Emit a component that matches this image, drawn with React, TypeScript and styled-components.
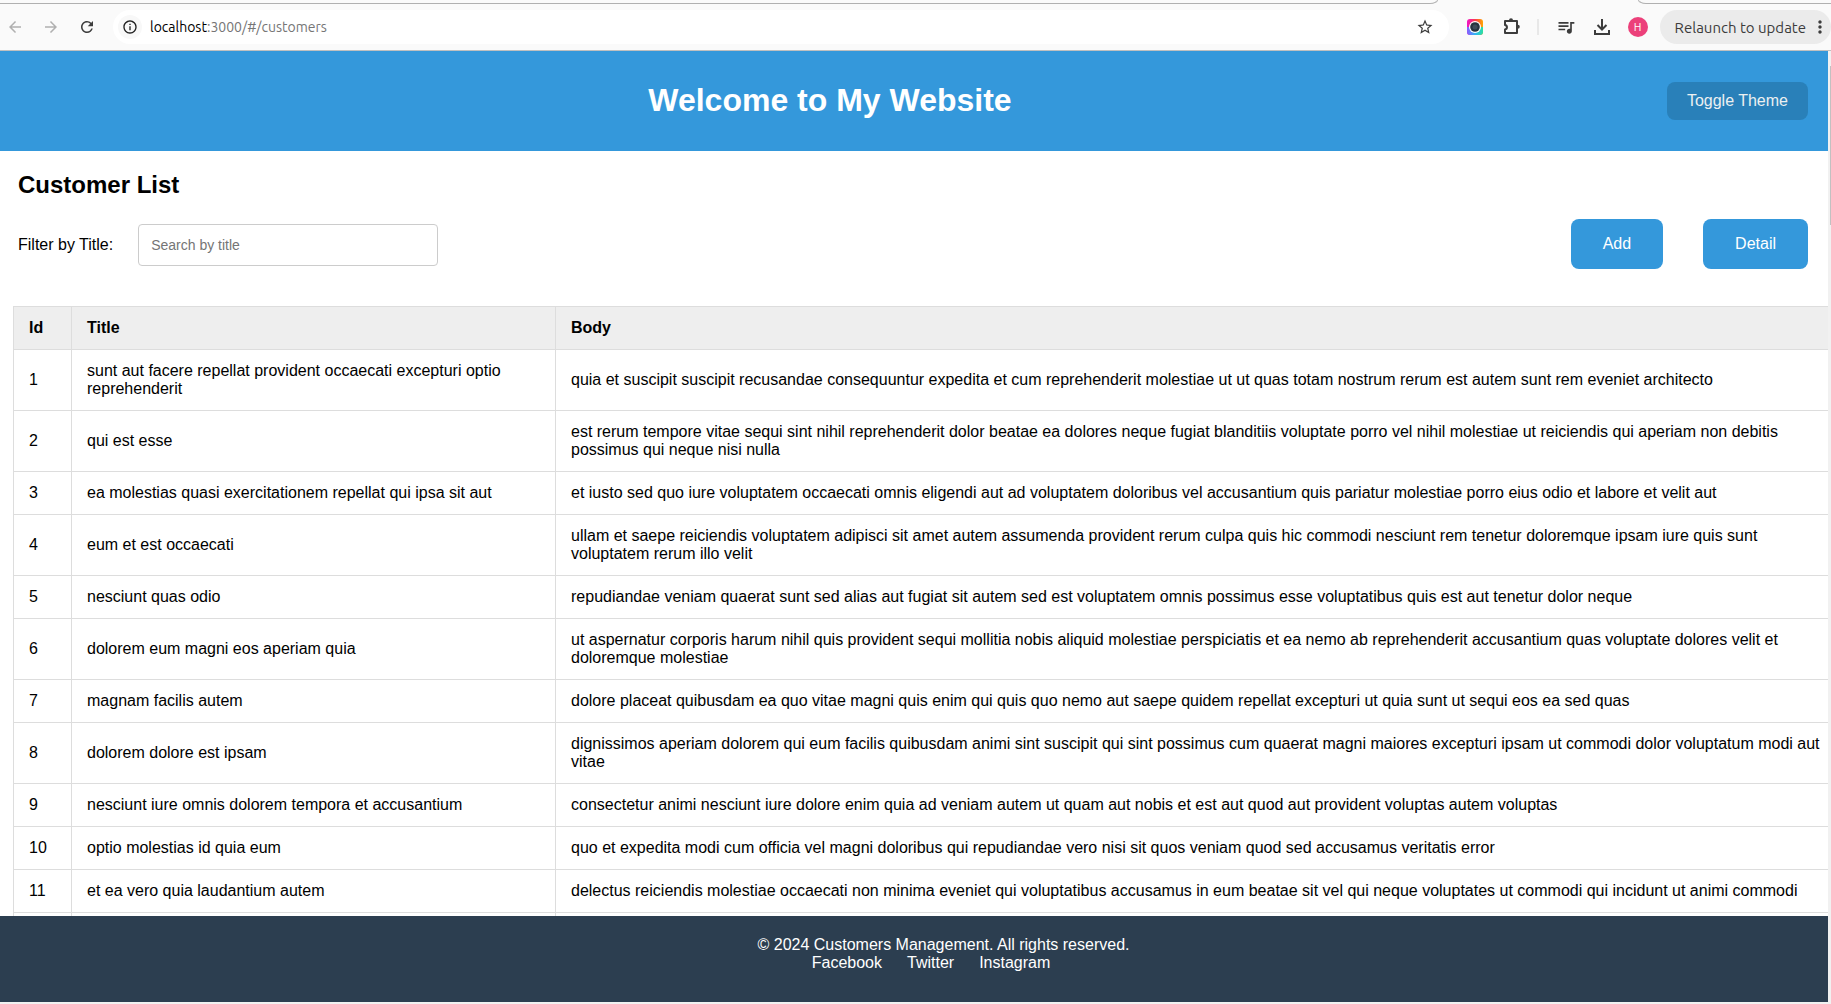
import React, { useState } from "react";
import styled, { createGlobalStyle } from "styled-components";
import {
  MdArrowBack,
  MdArrowForward,
  MdInfoOutline,
  MdMoreVert,
  MdQueueMusic,
  MdRefresh,
  MdStarBorder,
} from "react-icons/md";

const GlobalStyle = createGlobalStyle`
  * {
    box-sizing: border-box;
  }

  body {
    margin: 0;
    overflow: hidden;
    color: #000;
    background: #fff;
    font-family: "Liberation Sans", Arial, sans-serif;
    font-size: 16px;
  }

  button,
  input {
    font-family: inherit;
  }
`;

const Window = styled.div`
  display: flex;
  flex-direction: column;
  height: 100vh;
`;

/* Browser chrome */

const TabStrip = styled.div`
  display: flex;
  flex: none;
  gap: 200px;
  height: 4px;
  background: #fafafa;
`;

const TabEdge = styled.div<{ $side: "left" | "right" }>`
  border: 0 solid #b0b0b0;
  border-bottom-width: 1px;
  ${({ $side }) =>
    $side === "left"
      ? "flex: 1; border-right-width: 1px; border-bottom-right-radius: 8px 4px;"
      : "width: 193px; border-left-width: 1px; border-bottom-left-radius: 8px 4px;"}
`;

const Toolbar = styled.div`
  display: flex;
  flex: none;
  align-items: center;
  height: 47px;
  padding-left: 5px;
  border-bottom: 1px solid #c0c0c0;
  background: #fafafa;
  color: #3c3c3c;
  font-family: Ubuntu, "Noto Sans", sans-serif;
  font-size: 14px;
`;

const NavGroup = styled.div`
  display: flex;
  gap: 16px;
  margin-right: 16px;
`;

const IconButton = styled.button`
  display: flex;
  align-items: center;
  justify-content: center;
  width: 20px;
  height: 20px;
  padding: 0;
  border: 0;
  background: none;
  color: #3c3c3c;

  &:disabled {
    color: #b0b0b0;
  }
`;

const AddressBar = styled.div`
  display: flex;
  flex: 1;
  align-items: center;
  gap: 8px;
  height: 34px;
  padding: 0 14px 0 5px;
  border-radius: 17px;
  background: #fff;
`;

const SiteInfo = styled(IconButton)`
  width: 24px;
  height: 24px;
  border-radius: 50%;
  background: #f8f8f8;
  color: #202020;
`;

const Url = styled.div`
  flex: 1;
  color: #757575;
`;

const Host = styled.span`
  color: #000;
`;

const Actions = styled.div`
  display: flex;
  align-items: center;
  gap: 16px;
  padding: 0 12px 0 18px;
`;

const PinnedExtension = styled(IconButton)`
  width: 18px;
  justify-content: flex-start;
`;

const Divider = styled.div`
  width: 2px;
  height: 16px;
  margin: 0 1px 0 0;
  background: #e8e8e8;
`;

const Avatar = styled(IconButton)`
  border-radius: 50%;
  background: #ec407a;
  color: #fff;
  font-size: 11px;
`;

const Relaunch = styled.button`
  display: flex;
  align-items: center;
  gap: 4px;
  height: 34px;
  padding: 0 1px 0 15px;
  border: 0;
  border-radius: 17px;
  background: #ebebeb;
  color: #3c3c3c;
  font-size: 15px;
`;

/* Page */

const Viewport = styled.div`
  display: flex;
  flex: 1;
  min-height: 0;
`;

const Page = styled.div`
  display: flex;
  flex: 1;
  flex-direction: column;
  min-width: 0;
`;

const Header = styled.header`
  display: flex;
  flex: none;
  align-items: center;
  gap: 27px;
  height: 100px;
  padding: 0 20px;
  background: #3498db;
  color: #fff;
`;

const SiteTitle = styled.h1`
  flex: 1;
  margin: 0;
  padding-bottom: 2px;
  font-size: 32px;
  line-height: 36px;
  text-align: center;
`;

const Button = styled.button<{ $compact?: boolean }>`
  padding: ${({ $compact }) => ($compact ? "10px 20px" : "16px 32px")};
  border: 0;
  border-radius: 8px;
  background: ${({ $compact }) => ($compact ? "#2980b9" : "#3498db")};
  color: ${({ $compact }) => ($compact ? "#ecf0f1" : "#fff")};
  font-size: 16px;
  line-height: 18px;
`;

const Main = styled.main`
  flex: 1;
  min-height: 0;
  overflow: hidden;
`;

const Heading = styled.h2`
  margin: 20px 18px;
  font-size: 24px;
  line-height: 28px;
`;

const FilterBar = styled.div`
  display: flex;
  align-items: center;
  justify-content: space-between;
  margin-bottom: 37px;
  padding: 0 20px 0 18px;
`;

const Field = styled.div`
  display: flex;
  align-items: center;
  gap: 25px;
  padding-top: 2px;
`;

const SearchInput = styled.input`
  width: 300px;
  height: 42px;
  padding: 12px;
  border: 1px solid #ccc;
  border-radius: 4px;
  font-size: 14px;

  &::placeholder {
    color: #757575;
  }
`;

const ButtonGroup = styled.div`
  display: flex;
  gap: 40px;
`;

const Table = styled.table`
  width: 100%;
  margin-left: 13px;
  border-collapse: collapse;
  table-layout: fixed;
  line-height: 18px;
`;

const Col = styled.col<{ $width?: number }>`
  width: ${({ $width }) => ($width ? `${$width}px` : "auto")};
`;

const Th = styled.th`
  padding: 12px 15px;
  border: 1px solid #ddd;
  background: #eee;
  text-align: left;
`;

const Td = styled.td`
  padding: 12px 15px;
  border: 1px solid #ddd;
`;

const Footer = styled.footer`
  flex: none;
  padding: 20px 0 30px 59px;
  background: #2c3e50;
  color: #fff;
  line-height: 18px;
  text-align: center;
`;

const Copyright = styled.p`
  margin: 0;
`;

const SocialLinks = styled.nav`
  display: flex;
  justify-content: center;
`;

const SocialLink = styled.a`
  margin-right: 25px;
  color: #fff;
  text-decoration: none;
`;

const VerticalScroll = styled.div`
  flex: none;
  width: 3px;
  padding: 15px 0 0 2px;
  background: #f1f1f1;
`;

const ScrollThumb = styled.div`
  height: 17%;
  background: #c1c1c1;
`;

const HorizontalScroll = styled.div`
  flex: none;
  height: 2px;
  background: #f1f1f1;
`;

const customers = [
  ["sunt aut facere repellat provident occaecati excepturi optio reprehenderit", "quia et suscipit suscipit recusandae consequuntur expedita et cum reprehenderit molestiae ut ut quas totam nostrum rerum est autem sunt rem eveniet architecto"],
  ["qui est esse", "est rerum tempore vitae sequi sint nihil reprehenderit dolor beatae ea dolores neque fugiat blanditiis voluptate porro vel nihil molestiae ut reiciendis qui aperiam non debitis possimus qui neque nisi nulla"],
  ["ea molestias quasi exercitationem repellat qui ipsa sit aut", "et iusto sed quo iure voluptatem occaecati omnis eligendi aut ad voluptatem doloribus vel accusantium quis pariatur molestiae porro eius odio et labore et velit aut"],
  ["eum et est occaecati", "ullam et saepe reiciendis voluptatem adipisci sit amet autem assumenda provident rerum culpa quis hic commodi nesciunt rem tenetur doloremque ipsam iure quis sunt voluptatem rerum illo velit"],
  ["nesciunt quas odio", "repudiandae veniam quaerat sunt sed alias aut fugiat sit autem sed est voluptatem omnis possimus esse voluptatibus quis est aut tenetur dolor neque"],
  ["dolorem eum magni eos aperiam quia", "ut aspernatur corporis harum nihil quis provident sequi mollitia nobis aliquid molestiae perspiciatis et ea nemo ab reprehenderit accusantium quas voluptate dolores velit et doloremque molestiae"],
  ["magnam facilis autem", "dolore placeat quibusdam ea quo vitae magni quis enim qui quis quo nemo aut saepe quidem repellat excepturi ut quia sunt ut sequi eos ea sed quas"],
  ["dolorem dolore est ipsam", "dignissimos aperiam dolorem qui eum facilis quibusdam animi sint suscipit qui sint possimus cum quaerat magni maiores excepturi ipsam ut commodi dolor voluptatum modi aut vitae"],
  ["nesciunt iure omnis dolorem tempora et accusantium", "consectetur animi nesciunt iure dolore enim quia ad veniam autem ut quam aut nobis et est aut quod aut provident voluptas autem voluptas"],
  ["optio molestias id quia eum", "quo et expedita modi cum officia vel magni doloribus qui repudiandae vero nisi sit quos veniam quod sed accusamus veritatis error"],
  ["et ea vero quia laudantium autem", "delectus reiciendis molestiae occaecati non minima eveniet qui voluptatibus accusamus in eum beatae sit vel qui neque voluptates ut commodi qui incidunt ut animi commodi"],
].map(([title, body], index) => ({ id: index + 1, title, body }));

function CameraIcon() {
  return (
    <svg width="16" height="16" viewBox="0 0 16 16" aria-hidden="true">
      <defs>
        <linearGradient id="warm" x1="0" y1="0" x2="1" y2="0">
          <stop offset="0" stopColor="#f013c8" />
          <stop offset="0.5" stopColor="#fb3b4e" />
          <stop offset="1" stopColor="#ffa800" />
        </linearGradient>
        <linearGradient id="cool" x1="0" y1="0" x2="1" y2="0">
          <stop offset="0" stopColor="#8a5cff" />
          <stop offset="0.5" stopColor="#2fb4f5" />
          <stop offset="1" stopColor="#29e0a0" />
        </linearGradient>
      </defs>
      <rect width="16" height="16" rx="3" fill="url(#warm)" />
      <path d="M0 8h16v5a3 3 0 0 1-3 3H3a3 3 0 0 1-3-3z" fill="url(#cool)" />
      <circle cx="8" cy="8" r="6" fill="#fff" />
      <circle cx="8" cy="8" r="4.8" fill="#26323e" />
      <circle cx="8" cy="8" r="2.5" fill="#3c4a58" />
    </svg>
  );
}

function PuzzleIcon() {
  return (
    <svg width="20" height="20" viewBox="0 0 20 20" fill="none" aria-hidden="true">
      <path
        d="M4 4h12v12H4v-3.500c2.600-.4 2.600-4.100 0-4.500z"
        stroke="#3c3c3c"
        strokeWidth="2"
        strokeLinejoin="round"
      />
      <path d="M8 3.200a2 2 0 0 1 4 0zM16.800 7.800a2 2 0 0 1 0 4z" fill="#3c3c3c" />
    </svg>
  );
}

function DownloadIcon() {
  return (
    <svg width="20" height="20" viewBox="0 0 20 20" fill="none" aria-hidden="true">
      <path d="M10 2v10M5.500 8l4.500 4.500L14.500 8M3 13v4h14v-4" stroke="#3c3c3c" strokeWidth="2" />
    </svg>
  );
}

function BrowserChrome() {
  return (
    <>
      <TabStrip>
        <TabEdge $side="left" />
        <TabEdge $side="right" />
      </TabStrip>
      <Toolbar>
        <NavGroup>
          <IconButton aria-label="Back" disabled><MdArrowBack size={18} /></IconButton>
          <IconButton aria-label="Forward" disabled><MdArrowForward size={18} /></IconButton>
          <IconButton aria-label="Reload"><MdRefresh size={18} /></IconButton>
        </NavGroup>
        <AddressBar>
          <SiteInfo aria-label="Site information"><MdInfoOutline size={16} /></SiteInfo>
          <Url><Host>localhost</Host>:3000/#/customers</Url>
          <IconButton aria-label="Bookmark"><MdStarBorder size={18} /></IconButton>
        </AddressBar>
        <Actions>
          <PinnedExtension aria-label="Screen capture"><CameraIcon /></PinnedExtension>
          <IconButton aria-label="Extensions"><PuzzleIcon /></IconButton>
          <Divider />
          <IconButton aria-label="Media"><MdQueueMusic size={20} /></IconButton>
          <IconButton aria-label="Downloads"><DownloadIcon /></IconButton>
          <Avatar aria-label="Profile">H</Avatar>
        </Actions>
        <Relaunch>
          Relaunch to update
          <MdMoreVert size={20} />
        </Relaunch>
      </Toolbar>
    </>
  );
}

export default function App() {
  const [filter, setFilter] = useState("");
  const rows = customers.filter(({ title }) => title.includes(filter.toLowerCase()));

  return (
    <Window>
      <GlobalStyle />
      <BrowserChrome />
      <Viewport>
        <Page>
          <Header>
            <SiteTitle>Welcome to My Website</SiteTitle>
            <Button $compact>Toggle Theme</Button>
          </Header>
          <Main>
            <Heading>Customer List</Heading>
            <FilterBar>
              <Field>
                <label htmlFor="title-filter">Filter by Title:</label>
                <SearchInput
                  id="title-filter"
                  type="text"
                  placeholder="Search by title"
                  value={filter}
                  onChange={(event) => setFilter(event.target.value)}
                />
              </Field>
              <ButtonGroup>
                <Button>Add</Button>
                <Button>Detail</Button>
              </ButtonGroup>
            </FilterBar>
            <Table>
              <colgroup>
                <Col $width={58} />
                <Col $width={484} />
                <Col />
              </colgroup>
              <thead>
                <tr>
                  <Th>Id</Th>
                  <Th>Title</Th>
                  <Th>Body</Th>
                </tr>
              </thead>
              <tbody>
                {rows.map(({ id, title, body }) => (
                  <tr key={id}>
                    <Td>{id}</Td>
                    <Td>{title}</Td>
                    <Td>{body}</Td>
                  </tr>
                ))}
                <tr>
                  <Td />
                  <Td />
                  <Td />
                </tr>
              </tbody>
            </Table>
          </Main>
          <Footer>
            <Copyright>© 2024 Customers Management. All rights reserved.</Copyright>
            <SocialLinks>
              <SocialLink href="#facebook">Facebook</SocialLink>
              <SocialLink href="#twitter">Twitter</SocialLink>
              <SocialLink href="#instagram">Instagram</SocialLink>
            </SocialLinks>
          </Footer>
        </Page>
        <VerticalScroll>
          <ScrollThumb />
        </VerticalScroll>
      </Viewport>
      <HorizontalScroll />
    </Window>
  );
}
